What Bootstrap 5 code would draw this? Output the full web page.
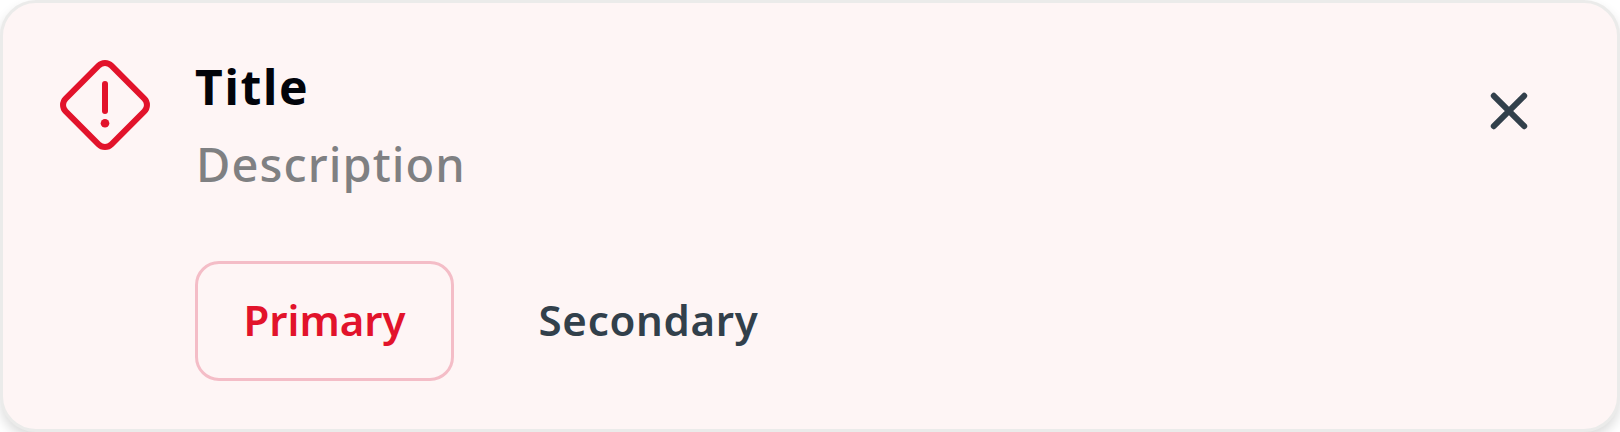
<!DOCTYPE html>
<html lang="en">
<head>
<meta charset="utf-8">
<title>Alert</title>
<link href="https://cdn.jsdelivr.net/npm/bootstrap@5.3.0/dist/css/bootstrap.min.css" rel="stylesheet">
<style>
body{font-family:"Noto Sans","Open Sans",sans-serif;height:432px;overflow:hidden;background:#fff}
.notice{height:432px;background:#fef5f5;border:3px solid #ebebea;border-radius:36px;padding:57px 84px 0 57px;box-shadow:0 6px 12px rgba(0,0,0,.14)}
.notice-copy{margin-left:45px}
.notice-title{font-size:48px;line-height:54px;font-weight:700;color:#02040a;letter-spacing:1.7px}
.notice-desc{font-size:47px;line-height:70px;margin-top:15px;padding:0 0 2px 1px;color:#7f8082;font-weight:500;letter-spacing:1.1px}
.notice-actions{margin-top:60px}
.notice .btn{height:120px;font-size:42px;font-weight:600;line-height:60px;border:3px solid transparent;border-radius:24px;padding:0 0 2px}
.btn-main,.btn-main:hover{width:259px;color:#e2132b;border-color:#f4bdc7!important}
.btn-plain,.btn-plain:hover{width:341px;color:#32404b;letter-spacing:.7px}
.notice-close{width:48px;height:48px;margin-top:27px}
</style>
</head>
<body>
<div class="notice d-flex align-items-start" role="alert">
<svg class="flex-shrink-0" width="90" height="90" viewBox="0 0 90 90" fill="none" stroke="#e2132b" stroke-width="6" stroke-linecap="round"><path d="M38.6 5.7a9 9 0 0 1 12.8 0L84.3 38.6a9 9 0 0 1 0 12.8L51.4 84.3a9 9 0 0 1-12.8 0L5.7 51.4a9 9 0 0 1 0-12.8Z"/><path d="M45 24v27"/><circle cx="45" cy="63.2" r="4.3" fill="#e2132b" stroke="none"/></svg>
<div class="notice-copy flex-grow-1">
<div class="notice-title"><span>Title</span></div>
<div class="notice-desc"><span>Description</span></div>
<div class="notice-actions d-flex gap-4">
<button type="button" class="btn btn-main"><span>Primary</span></button>
<button type="button" class="btn btn-plain"><span>Secondary</span></button>
</div>
</div>
<button type="button" class="notice-close border-0 bg-transparent p-0 d-flex flex-shrink-0" aria-label="Close"><svg width="48" height="48" viewBox="0 0 48 48" stroke="#32404b" stroke-width="6" stroke-linecap="round"><path d="m8.8 8.8 30.4 30.4M39.2 8.8 8.8 39.2"/></svg></button>
</div>
<script src="https://cdn.jsdelivr.net/npm/bootstrap@5.3.0/dist/js/bootstrap.bundle.min.js"></script>
</body>
</html>
